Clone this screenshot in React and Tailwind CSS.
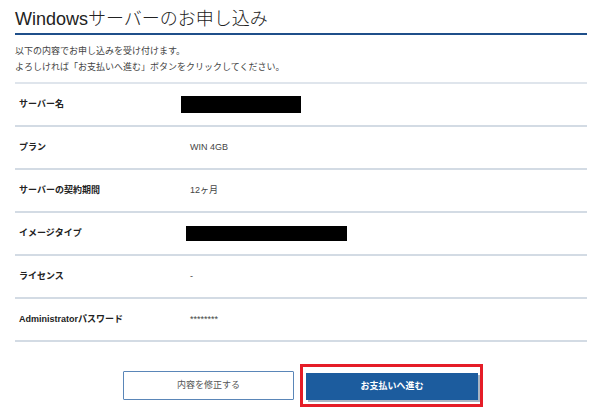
export default function App() {
  const rows = [
    { label: 'サーバー名', box: 'ml-[-9px] w-[120px] h-[17px]' },
    { label: 'プラン', value: 'WIN 4GB' },
    { label: 'サーバーの契約期間', value: '12ヶ月' },
    { label: 'イメージタイプ', box: 'ml-[-4px] w-[161px] h-[15px]' },
    { label: 'ライセンス', value: '-' },
    { label: 'Administratorパスワード', value: '********' },
  ];

  return (
    <div
      className="w-[600px] h-[409px] bg-white px-[13px] text-[#333]"
      style={{ fontFamily: '"Liberation Sans", "Noto Sans CJK JP", sans-serif' }}
    >
      <div className="ml-[2px]">
        <h1 className="pt-[6px] text-[18px] leading-[26px] font-light text-[#222] border-b-2 border-[#1f4f8a] pb-[1px]">
          Windowsサーバーのお申し込み
        </h1>

        <div className="pt-[8px] pb-[7px] text-[9px] leading-[16px] text-[#444] border-b-2 border-[#dfe5ec]">
          <p>以下の内容でお申し込みを受け付けます。</p>
          <p>よろしければ「お支払いへ進む」ボタンをクリックしてください。</p>
        </div>

        {rows.map((r) => (
          <div
            key={r.label}
            className="flex items-center h-[43px] border-b-2 border-[#d3dbe4]"
          >
            <div className="w-[175px] pl-[4px] text-[9px] font-bold text-[#222]">{r.label}</div>
            {r.box ? (
              <div className={`bg-black ${r.box}`} />
            ) : (
              <div className="text-[9px] text-[#444]">{r.value}</div>
            )}
          </div>
        ))}

        <div className="flex items-center mt-[22px] ml-[108px] gap-[6px]">
          <button className="w-[171px] h-[29px] border border-[#5a86b8] bg-white text-[9px] text-[#555] rounded-[1px]">
            内容を修正する
          </button>
          <div className="border-[3px] border-[#e51d27] pl-[3px] pr-[2px] pt-[5px] pb-[4px]">
            <button className="w-[172px] h-[27px] bg-[#1c5c9e] text-white text-[9px] font-bold shadow-[2px_2px_0_#a9b6c4]">
              お支払いへ進む
            </button>
          </div>
        </div>
      </div>
    </div>
  );
}
